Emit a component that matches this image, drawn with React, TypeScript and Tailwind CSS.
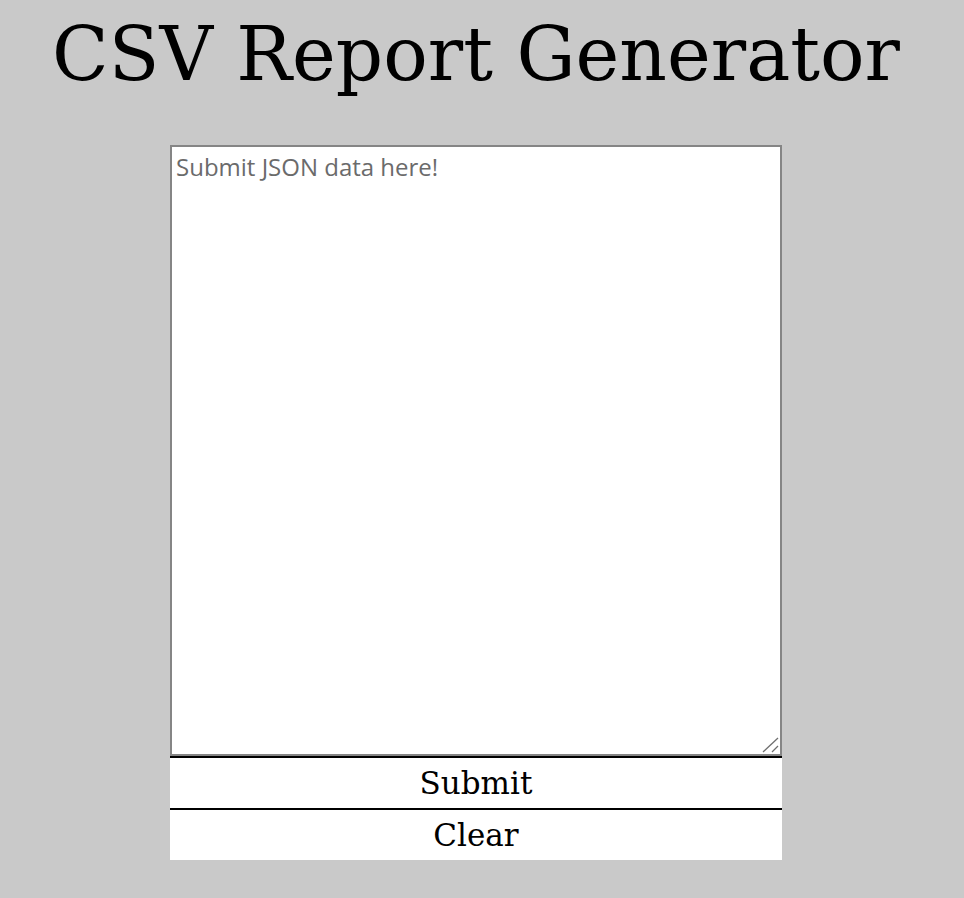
import React from "react";

export default function App() {
  return (
    <div className="min-h-[898px] w-full bg-[#c9c9c9]">
      <div className="flex w-[952px] flex-col items-center">
        <h1 className="mt-[10px] h-[135px] font-['DejaVu_Serif',serif] text-[74px] leading-[88px] text-black">
          CSV Report Generator
        </h1>
        <div className="flex w-[612px] flex-col">
          <div className="relative h-[611px] w-[612px]">
            <textarea
              placeholder="Submit JSON data here!"
              className="block h-full w-full resize-none border-2 border-[#858585] bg-white px-[4px] py-[5px] font-['Open_Sans','Noto_Sans',sans-serif] text-[24px] leading-[30px] text-black outline-none placeholder:text-[#6b6b6b]"
            />
            <svg
              className="pointer-events-none absolute bottom-[3px] right-[3px]"
              width="17"
              height="16"
              viewBox="0 0 17 16"
            >
              <line x1="1" y1="15" x2="16" y2="1" stroke="#6f6f6f" strokeWidth="1.3" />
              <line x1="10" y1="15" x2="16" y2="9" stroke="#6f6f6f" strokeWidth="1.3" />
            </svg>
          </div>
          <button className="h-[52px] w-[612px] border-t-2 border-black bg-white font-['DejaVu_Serif',serif] text-[31px] leading-[48px] text-black">
            Submit
          </button>
          <button className="h-[52px] w-[612px] border-t-2 border-black bg-white font-['DejaVu_Serif',serif] text-[31px] leading-[48px] text-black">
            Clear
          </button>
        </div>
      </div>
    </div>
  );
}
